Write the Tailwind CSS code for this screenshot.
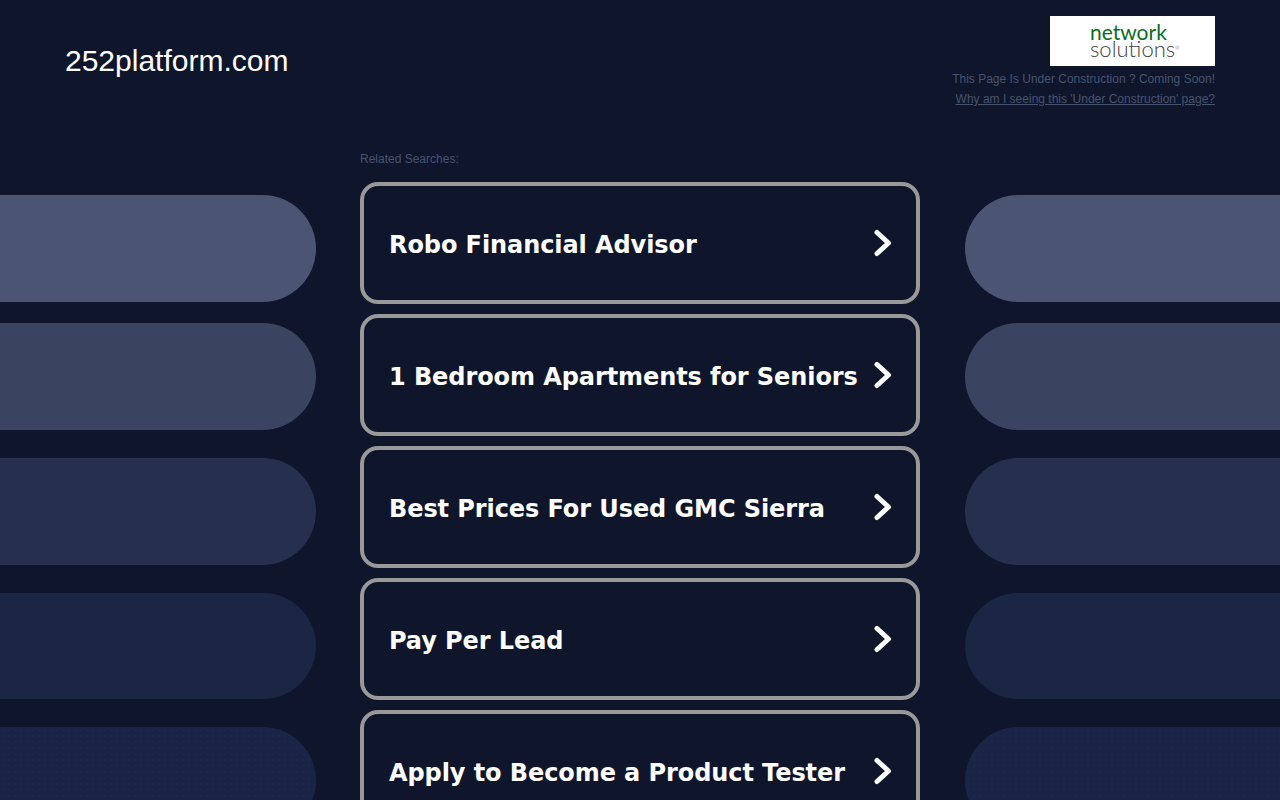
<!DOCTYPE html>
<html lang="en">
<head>
    <meta charset="UTF-8">
    <meta name="viewport" content="width=device-width, initial-scale=1.0">
    <title>252platform.com</title>
    <script src="https://cdn.jsdelivr.net/npm/@tailwindcss/browser@4"></script>
</head>
<body class="h-[800px] overflow-hidden bg-[#0f162b] font-['Liberation_Sans',Arial,sans-serif]">
    <!-- header -->
    <header class="flex h-[150px] justify-between pl-[65px] pr-[65px] pt-4">
        <h1 class="pt-[26px] text-[30px] leading-[37px] font-normal text-white">252platform.com</h1>
        <div class="flex flex-col items-end">
            <a href="#" class="flex h-[50px] w-[165px] flex-col items-start justify-center bg-white pb-[2px] pl-[40px] font-['Lato',sans-serif]">
                <span class="text-[21px] leading-[17px] text-[#0b6e22]">network</span>
                <span class="flex text-[22px] leading-[17px] font-light text-[#444444]">solutions<sup class="mt-[8px] text-[5px] leading-none">®</sup></span>
            </a>
            <p class="mt-[5px] text-xs leading-[16px] text-[#48536f]">This Page Is Under Construction ? Coming Soon!</p>
            <a href="#" class="mt-1 text-xs leading-[16px] text-[#48536f] underline">Why am I seeing this 'Under Construction' page?</a>
        </div>
    </header>

    <main class="flex">
        <!-- left pills -->
        <div class="flex w-[316px] shrink-0 flex-col pt-[45px]">
            <div class="h-[107px] rounded-r-[54px] bg-[#4b5573]"></div>
            <div class="mt-[21px] h-[107px] rounded-r-[54px] bg-[#3a4461]"></div>
            <div class="mt-[28px] h-[107px] rounded-r-[54px] bg-[#272f4e]"></div>
            <div class="mt-[28px] h-[106px] rounded-r-[54px] bg-[#1b2544]"></div>
            <div class="mt-[28px] h-[107px] rounded-r-[54px] bg-[#1a2446] bg-[radial-gradient(#1d2749_1px,transparent_1px)] bg-[size:6px_6px]"></div>
        </div>

        <!-- links -->
        <section class="ml-[44px] w-[560px] shrink-0">
            <p class="pt-[2px] text-xs leading-[14px] text-[#48536f]">Related Searches:</p>
            <div class="mt-4 flex flex-col gap-[10px] font-['DejaVu_Sans',sans-serif] text-[24px] font-bold tracking-[-0.08px] whitespace-nowrap text-white">
                <a href="#" class="flex h-[122px] items-center justify-between rounded-[18px] border-4 border-[#999999] pl-[25px] pr-[23px]">
                    <span class="pt-[4px]">Robo Financial Advisor</span>
                    <svg class="h-[28px] w-[20px] shrink-0" viewBox="0 0 20 28" fill="none" stroke="white" stroke-width="5" stroke-linecap="round" stroke-linejoin="round"><path d="M4 3.5 L15.5 14 L4 24.5"/></svg>
                </a>
                <a href="#" class="flex h-[122px] items-center justify-between rounded-[18px] border-4 border-[#999999] pl-[25px] pr-[23px]">
                    <span class="pt-[4px]">1 Bedroom Apartments for Seniors</span>
                    <svg class="h-[28px] w-[20px] shrink-0" viewBox="0 0 20 28" fill="none" stroke="white" stroke-width="5" stroke-linecap="round" stroke-linejoin="round"><path d="M4 3.5 L15.5 14 L4 24.5"/></svg>
                </a>
                <a href="#" class="flex h-[122px] items-center justify-between rounded-[18px] border-4 border-[#999999] pl-[25px] pr-[23px]">
                    <span class="pt-[4px]">Best Prices For Used GMC Sierra</span>
                    <svg class="h-[28px] w-[20px] shrink-0" viewBox="0 0 20 28" fill="none" stroke="white" stroke-width="5" stroke-linecap="round" stroke-linejoin="round"><path d="M4 3.5 L15.5 14 L4 24.5"/></svg>
                </a>
                <a href="#" class="flex h-[122px] items-center justify-between rounded-[18px] border-4 border-[#999999] pl-[25px] pr-[23px]">
                    <span class="pt-[4px]">Pay Per Lead</span>
                    <svg class="h-[28px] w-[20px] shrink-0" viewBox="0 0 20 28" fill="none" stroke="white" stroke-width="5" stroke-linecap="round" stroke-linejoin="round"><path d="M4 3.5 L15.5 14 L4 24.5"/></svg>
                </a>
                <a href="#" class="flex h-[122px] items-center justify-between rounded-[18px] border-4 border-[#999999] pl-[25px] pr-[23px]">
                    <span class="pt-[4px]">Apply to Become a Product Tester</span>
                    <svg class="h-[28px] w-[20px] shrink-0" viewBox="0 0 20 28" fill="none" stroke="white" stroke-width="5" stroke-linecap="round" stroke-linejoin="round"><path d="M4 3.5 L15.5 14 L4 24.5"/></svg>
                </a>
            </div>
        </section>

        <!-- right pills -->
        <div class="ml-[45px] flex flex-1 flex-col pt-[45px]">
            <div class="h-[107px] rounded-l-[54px] bg-[#4b5573]"></div>
            <div class="mt-[21px] h-[107px] rounded-l-[54px] bg-[#3a4461]"></div>
            <div class="mt-[28px] h-[107px] rounded-l-[54px] bg-[#272f4e]"></div>
            <div class="mt-[28px] h-[106px] rounded-l-[54px] bg-[#1b2544]"></div>
            <div class="mt-[28px] h-[107px] rounded-l-[54px] bg-[#1a2446] bg-[radial-gradient(#1d2749_1px,transparent_1px)] bg-[size:6px_6px]"></div>
        </div>
    </main>
</body>
</html>
